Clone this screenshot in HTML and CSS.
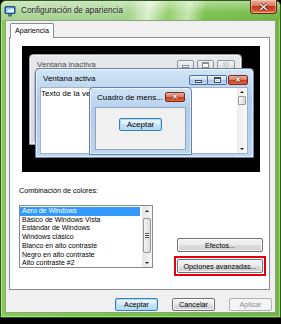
FILE: index.html
```html
<!doctype html>
<html lang="es">
  <head>
    <meta charset="UTF-8" />
    <title>Configuración de apariencia</title>
    <link rel="stylesheet" href="styles.css">
  </head>
  <body>
    <div class="window">
      <div class="titlebar">
        <svg class="app-icon" width="12" height="12" viewBox="0 0 12 12">
          <rect x="0.5" y="1" width="11" height="8" rx="1.5" fill="#1f4f8f" />
          <rect x="2" y="2.5" width="8" height="5" rx="0.5" fill="#8fd0f2" />
          <path d="M2 7.5 Q6 3 10 4 L10 7.5 Z" fill="#e8f6ff" />
          <rect x="4" y="9" width="4" height="2.5" fill="#5d7186" />
        </svg>
        <span class="title">Configuración de apariencia</span>
        <button class="close-main">
          <svg width="9" height="8" viewBox="0 0 9 8">
            <path d="M1 1 L8 7 M8 1 L1 7" stroke="#5a1408" stroke-width="2.6" />
            <path d="M1 1 L8 7 M8 1 L1 7" stroke="#fff" stroke-width="1.4" />
          </svg>
        </button>
      </div>

      <div class="client">
        <div class="tabs"><span class="tab">Apariencia</span></div>
        <div class="panel">
          <div class="preview">
            <div class="pv-win pv-inactive">
              <div class="pv-head">
                <span class="pv-title">Ventana inactiva</span>
                <div class="pv-ctrls">
                  <span class="ctl ctl-min"><i class="g-min"></i></span>
                  <span class="ctl ctl-max"><i class="g-max"></i></span>
                  <span class="ctl ctl-close"><i class="g-x">✕</i></span>
                </div>
              </div>
              <div class="pv-client"></div>
            </div>

            <div class="pv-win pv-active">
              <div class="pv-head">
                <span class="pv-title">Ventana activa</span>
                <div class="pv-ctrls">
                  <span class="ctl ctl-min"><i class="g-min"></i></span>
                  <span class="ctl ctl-max"><i class="g-max"></i></span>
                  <span class="ctl ctl-close"><i class="g-x">✕</i></span>
                </div>
              </div>
              <div class="pv-client">
                <div class="pv-body">
                  <span class="pv-text">Texto de la ven</span>
                </div>
                <div class="mini-sb">
                  <span class="arrow-up"></span>
                  <span class="mini-thumb"></span>
                  <span class="arrow-down"></span>
                </div>
              </div>
            </div>

            <div class="pv-win pv-msg">
              <div class="pv-head">
                <span class="pv-title">Cuadro de mens...</span>
                <div class="pv-ctrls">
                  <span class="ctl ctl-close"><i class="g-x">✕</i></span>
                </div>
              </div>
              <div class="msg-body">
                <button class="btn btn-default msg-ok">Aceptar</button>
              </div>
            </div>
          </div>

          <div class="scheme-label">Combinación de colores:</div>
          <div class="scheme-row">
            <div class="listbox">
              <ul class="items">
                <li class="selected">Aero de Windows</li>
                <li>Básico de Windows Vista</li>
                <li>Estándar de Windows</li>
                <li>Windows clásico</li>
                <li>Blanco en alto contraste</li>
                <li>Negro en alto contraste</li>
                <li>Alto contraste #2</li>
              </ul>
              <div class="sb">
                <span class="sb-btn"><span class="arrow-up"></span></span>
                <span class="sb-thumb"><span class="grip"></span></span>
                <span class="sb-fill"></span>
                <span class="sb-btn"><span class="arrow-down"></span></span>
              </div>
            </div>
            <div class="side-buttons">
              <button class="btn btn-side">Efectos...</button>
              <span class="highlight">
                <button class="btn btn-side">Opciones avanzadas...</button>
              </span>
            </div>
          </div>
        </div>

        <div class="footer-buttons">
          <button class="btn btn-default">Aceptar</button>
          <button class="btn">Cancelar</button>
          <button class="btn btn-disabled">Aplicar</button>
        </div>
      </div>
    </div>
  </body>
</html>
```

FILE: styles.css
```css
* {
  box-sizing: border-box;
}

body {
  margin: 0;
  background: #000;
  font-family: "Liberation Sans", Arial, sans-serif;
  font-size: 7.2px;
  color: #000;
}

.window {
  width: 281px;
  height: 318px;
  display: flex;
  flex-direction: column;
  padding: 0 4px 4px;
  border: 1px solid #2e5b1d;
  border-radius: 6px 6px 0 0;
  background: linear-gradient(90deg, #86cb58, #78c048 50%, #6fb83f);
  box-shadow: inset 0 0 0 1px rgba(255, 255, 255, 0.35);
}

/* title bar */
.titlebar {
  height: 19px;
  margin: 0 -4px;
  padding-left: 3px;
  display: flex;
  align-items: center;
  border-radius: 5px 5px 0 0;
  background:
    linear-gradient(rgba(255, 255, 255, 0.45), rgba(255, 255, 255, 0.05) 60%, transparent),
    linear-gradient(100deg, #a9d495 0%, #a3d28a 46%, #dcf0cf 53%, #8fcd66 60%, #c6e7b0 67%, #79c04c 73%, #6fb942 100%);
}

.app-icon {
  flex: none;
  margin-top: 1px;
}

.title {
  margin-left: 5px;
  font-size: 8.2px;
  color: #262626;
  text-shadow: 0 0 4px rgba(255, 255, 255, 0.9);
}

.close-main {
  margin: -1px 3px 0 auto;
  align-self: flex-start;
  width: 27px;
  height: 14px;
  padding: 0;
  display: flex;
  align-items: center;
  justify-content: center;
  border: 1px solid #6a2114;
  border-top: none;
  border-radius: 0 0 4px 4px;
  background: linear-gradient(#eab2a4, #dc7b63 42%, #c23c1d 50%, #cf4d2b 78%, #e8894f);
  box-shadow: inset 0 0 0 1px rgba(255, 220, 200, 0.5);
}

/* client area */
.client {
  flex: 1;
  display: flex;
  flex-direction: column;
  background: #f0f0f0;
  border: 1px solid #8da47f;
}

.tabs {
  display: flex;
  padding: 2px 0 0 4px;
}

.tab {
  height: 15px;
  margin-bottom: -1px;
  padding: 0 4px;
  line-height: 13px;
  background: #fff;
  border: 1px solid #898c95;
  border-bottom: none;
  border-radius: 2px 2px 0 0;
  position: relative;
}

.panel {
  height: 253px;
  margin: 0 5px 0 3px;
  background: #fff;
  border: 1px solid #898c95;
}

/* preview canvas */
.preview {
  position: relative;
  height: 126px;
  margin: 8px 9px 0 12px;
  background: #000;
  overflow: hidden;
  font-size: 8px;
}

.pv-win {
  position: absolute;
  display: flex;
  flex-direction: column;
  border: 1px solid #6382a6;
  border-radius: 4px 4px 0 0;
  background: linear-gradient(#d3e5f6, #b2cdea 35%, #bcd6ef);
  box-shadow: inset 0 0 0 1px rgba(255, 255, 255, 0.55);
}

.pv-inactive {
  left: 7px;
  top: 8px;
  width: 213px;
  height: 91px;
  border-color: #9a9fa6;
  background: linear-gradient(#e6e8eb, #d6d9dd);
}

.pv-active {
  left: 13px;
  top: 22px;
  width: 219px;
  height: 90px;
}

.pv-msg {
  left: 67px;
  top: 41px;
  width: 103px;
  height: 68px;
}

.pv-head {
  display: flex;
  align-items: flex-start;
  height: 18px;
  flex: none;
}

.pv-title {
  margin: 5px 0 0 7px;
  line-height: 10px;
  white-space: nowrap;
}

.pv-inactive .pv-title {
  color: #4d4d4d;
  text-decoration: underline;
  text-decoration-color: #888;
}

.pv-ctrls {
  display: flex;
  margin: 5px 6px 0 auto;
}

.pv-active .pv-ctrls {
  margin: 6px 5px 0 auto;
}

.pv-msg .pv-ctrls {
  margin: 4px 6px 0 auto;
}

.ctl {
  width: 19px;
  height: 10px;
  display: flex;
  align-items: center;
  justify-content: center;
  border: 1px solid #52709a;
  background: linear-gradient(#eef5fc, #c9dcf0 48%, #a9c5e5 52%, #c6dbf1);
}

.ctl-min {
  border-radius: 2px 0 0 2px;
}

.ctl-max {
  border-left: none;
  border-radius: 0 2px 2px 0;
  margin-right: 1px;
}

.ctl-close {
  width: 20px;
  border-color: #7b2a1b;
  border-radius: 2px;
  background: linear-gradient(#eeb0a2, #dc7a62 45%, #c43d1e 52%, #dc6a3e);
}

.pv-inactive .ctl {
  width: 17px;
  height: 9px;
  margin-right: 3px;
  border: 1px solid #8f949b;
  border-radius: 2px;
  background: linear-gradient(#f4f5f6, #dcdfe3);
}

.pv-inactive .ctl-close {
  width: 18px;
  margin-right: 0;
}

.g-min {
  display: block;
  width: 7px;
  height: 3px;
  margin-top: 3px;
  background: #fff;
  border: 1px solid #3a4d66;
}

.g-max {
  display: block;
  width: 7px;
  height: 6px;
  border: 1px solid #3a4d66;
  border-top-width: 2px;
  box-shadow: 0 0 0 1px #fff inset;
}

.g-x {
  font-style: normal;
  font-size: 7px;
  line-height: 8px;
  font-weight: bold;
  color: #fff;
  text-shadow: 0 0 1px #4a1208, 0 0 1px #4a1208;
}

.pv-inactive .g-min,
.pv-inactive .g-max {
  border-color: #888d94;
}

.pv-inactive .g-x {
  color: #f4f4f4;
  text-shadow: 0 0 1px #777, 0 0 1px #777;
}

.pv-client {
  flex: 1;
  margin: 0 5px 3px 4px;
  background: #fff;
  border: 1px solid #9fb2c8;
  display: flex;
  overflow: hidden;
}

.pv-inactive .pv-client {
  border-color: #b4b8bd;
}

.pv-body {
  flex: 1;
}

.pv-text {
  display: block;
  padding-top: 1px;
  line-height: 10px;
  white-space: nowrap;
}

.mini-sb {
  width: 10px;
  display: flex;
  flex-direction: column;
  align-items: center;
  justify-content: space-between;
  padding: 3px 0 3px;
  background: linear-gradient(90deg, #ececec, #f8f8f8);
}

.mini-thumb {
  width: 8px;
  height: 9px;
  margin-bottom: auto;
  margin-top: 3px;
  border: 1px solid #9a9a9a;
  border-radius: 1px;
  background: linear-gradient(90deg, #f6f6f6, #dadada);
}

.arrow-up,
.arrow-down {
  width: 0;
  height: 0;
  border-left: 2px solid transparent;
  border-right: 2px solid transparent;
}

.arrow-up {
  border-bottom: 2px solid #222;
}

.arrow-down {
  border-top: 2px solid #222;
}

.msg-body {
  flex: 1;
  margin: 1px 5px 4px 5px;
  padding-top: 10px;
  display: flex;
  justify-content: center;
  align-items: flex-start;
  background: #f0f0f0;
  border: 1px solid #8fa6c0;
}

.msg-ok {
  width: 52px;
  height: 19px;
  font-size: 7.6px;
}

/* color schemes */
.scheme-label {
  margin-top: 14px;
  padding-left: 9px;
  line-height: 10px;
}

.scheme-row {
  display: flex;
  align-items: flex-start;
  margin-top: 9px;
  padding: 0 3px 0 9px;
}

.listbox {
  width: 134px;
  height: 63px;
  display: flex;
  border: 1px solid #828790;
  background: #fff;
}

.items {
  flex: 1;
  margin: 0 2px 0 0;
  padding: 1px 0 0;
  list-style: none;
  font-size: 7px;
  line-height: 8.7px;
}

.items li {
  padding-left: 2px;
  white-space: nowrap;
}

.items .selected {
  background: #3399ff;
  color: #fff;
}

.sb {
  width: 10px;
  display: flex;
  flex-direction: column;
  background: linear-gradient(90deg, #e4e4e4, #f6f6f6);
}

.sb-btn {
  height: 9px;
  display: flex;
  align-items: center;
  justify-content: center;
}

.sb-thumb {
  height: 35px;
  margin: 3px 1px 0;
  display: flex;
  align-items: center;
  justify-content: center;
  border: 1px solid #979797;
  border-radius: 2px;
  background: linear-gradient(90deg, #f5f5f5, #dcdcdc);
}

.grip {
  width: 4px;
  height: 5px;
  background: repeating-linear-gradient(#555 0 1px, transparent 1px 2px);
}

.sb-fill {
  flex: 1;
}

.side-buttons {
  width: 92px;
  margin: 33px 0 0 auto;
  display: flex;
  flex-direction: column;
  align-items: center;
  gap: 4px;
}

.highlight {
  display: flex;
  padding: 1px;
  border: 2px solid #e4000f;
}

/* buttons */
.btn {
  height: 13px;
  width: 43px;
  padding: 0;
  font: inherit;
  color: #000;
  border: 1px solid #707070;
  border-radius: 2px;
  background: linear-gradient(#f3f3f3, #ebebeb 48%, #dddddd 52%, #cfcfcf);
  box-shadow: inset 0 0 0 1px rgba(255, 255, 255, 0.8);
}

.btn-side {
  width: 86px;
  height: 14px;
}

.btn-default {
  border-color: #3c7fb1;
  background: linear-gradient(#edf6fc, #dbecf8 48%, #c4e1f5 52%, #b7d8f0);
  box-shadow: inset 0 0 0 1px #a8ddf7;
}

.btn-disabled {
  color: #8d8d8d;
  border-color: #adb2b5;
  background: #f4f4f4;
  box-shadow: none;
}

.footer-buttons {
  display: flex;
  justify-content: flex-end;
  gap: 14px;
  margin-top: 8px;
  padding-right: 3px;
}
```
